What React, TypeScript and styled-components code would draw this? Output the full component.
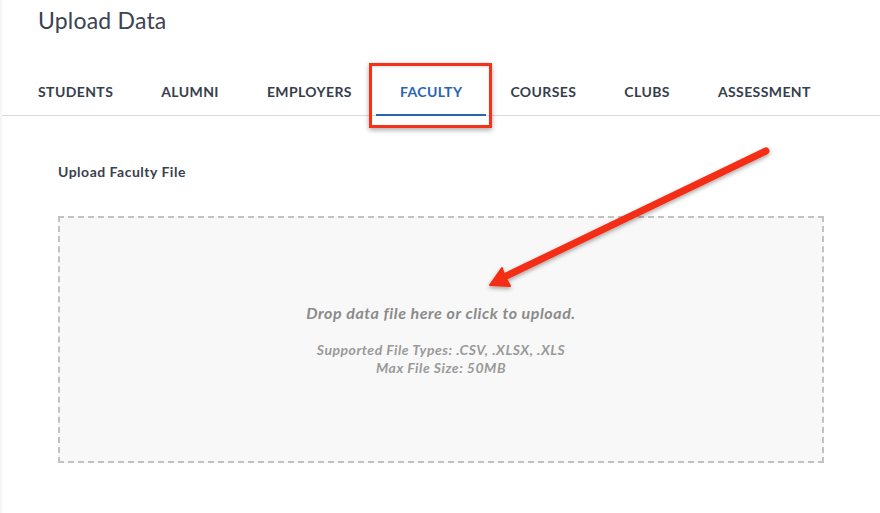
import React from "react";
import styled, { createGlobalStyle } from "styled-components";

const Global = createGlobalStyle`
  html, body { margin: 0; padding: 0; background: #ffffff; }
  body { font-family: Lato, "Open Sans", "Liberation Sans", sans-serif; }
  * { box-sizing: border-box; }
`;

const Page = styled.div`
  position: relative;
  width: 880px;
  height: 513px;
  background: #ffffff;
  border-left: 2px solid #f5f5f5;
  overflow: hidden;
`;

const Header = styled.header`
  height: 67px;
  padding-left: 36px;
`;

const Title = styled.h1`
  margin: 0;
  font-size: 23px;
  line-height: 40px;
  font-weight: 400;
  color: #3c4351;
  letter-spacing: 0.2px;
`;

const TabBar = styled.nav`
  display: flex;
  padding-left: 12px;
  border-bottom: 1px solid #d9d9d9;
`;

const Tab = styled.div<{ $active?: boolean }>`
  position: relative;
  padding: 17px 24px 14px;
  margin-bottom: -1px;
  font-size: 14px;
  line-height: 16px;
  font-weight: 700;
  letter-spacing: 0.4px;
  color: ${(p) => (p.$active ? "#2a64ae" : "#363e4b")};
  border-bottom: 2px solid ${(p) => (p.$active ? "#2a64ae" : "transparent")};
`;

const Highlight = styled.span`
  position: absolute;
  left: -7px;
  right: -6px;
  top: -4px;
  bottom: -14px;
  border: 3px solid #f5311a;
  box-shadow: 0 2px 5px rgba(0, 0, 0, 0.35), inset 0 1px 2px rgba(0, 0, 0, 0.12);
  pointer-events: none;
`;

const Content = styled.section`
  padding: 48px 56px 0 56px;
`;

const Label = styled.div`
  font-size: 14px;
  line-height: 16px;
  font-weight: 700;
  color: #3a414e;
  letter-spacing: 0.5px;
`;

const DropZone = styled.div`
  margin-top: 36px;
  height: 247px;
  border: 2px dashed #c2c2c2;
  background: #f8f8f8;
  display: flex;
  flex-direction: column;
  align-items: center;
  justify-content: center;
  font-style: italic;
  font-weight: 700;
`;

const DropText = styled.div`
  font-size: 16px;
  line-height: 20px;
  color: #8b8b8b;
  letter-spacing: 0.55px;
  margin-bottom: 18px;
`;

const Note = styled.div`
  font-size: 14px;
  line-height: 18px;
  color: #9a9a9a;
  letter-spacing: 0.5px;
`;

const ArrowLayer = styled.svg`
  position: absolute;
  left: 0;
  top: 0;
  pointer-events: none;
`;

const tabs = ["STUDENTS", "ALUMNI", "EMPLOYERS", "FACULTY", "COURSES", "CLUBS", "ASSESSMENT"];

export default function App() {
  return (
    <>
      <Global />
      <Page>
        <Header>
          <Title>Upload Data</Title>
        </Header>
        <TabBar>
          {tabs.map((t) => (
            <Tab key={t} $active={t === "FACULTY"}>
              {t}
              {t === "FACULTY" && <Highlight />}
            </Tab>
          ))}
        </TabBar>
        <Content>
          <Label>Upload Faculty File</Label>
          <DropZone>
            <DropText>Drop data file here or click to upload.</DropText>
            <Note>Supported File Types: .CSV, .XLSX, .XLS</Note>
            <Note>Max File Size: 50MB</Note>
          </DropZone>
        </Content>
        <ArrowLayer width="880" height="513" viewBox="0 0 880 513">
          <defs>
            <filter id="sh" x="-10%" y="-10%" width="120%" height="130%">
              <feDropShadow dx="0" dy="2" stdDeviation="2" floodColor="#000" floodOpacity="0.35" />
            </filter>
          </defs>
          <g filter="url(#sh)">
            <line x1="764" y1="151" x2="500" y2="278" stroke="#f42f12" strokeWidth="7" strokeLinecap="round" />
            <path d="M488 285 L500 268 L502 275 L508 286 Z" fill="#f42f12" stroke="#f42f12" strokeWidth="2" strokeLinejoin="round" />
          </g>
        </ArrowLayer>
      </Page>
    </>
  );
}
